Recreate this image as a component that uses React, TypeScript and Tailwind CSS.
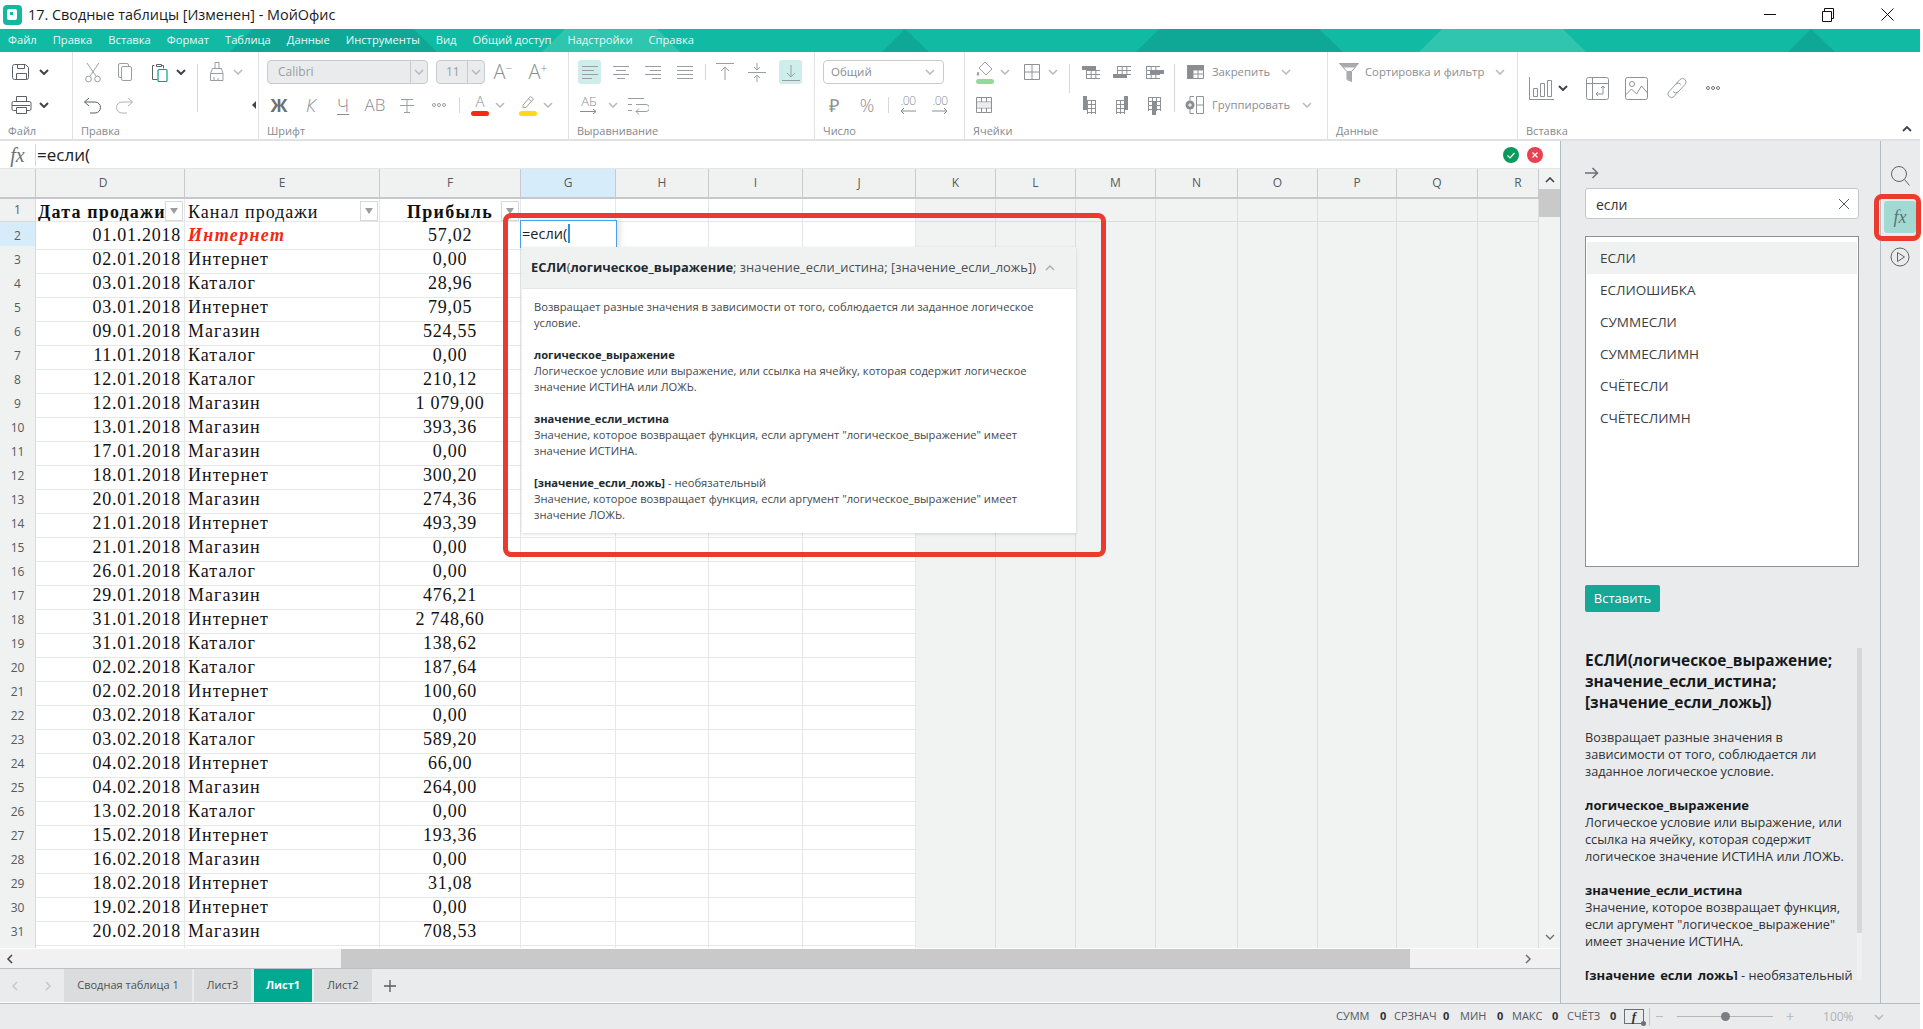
import type { ReactNode } from "react"

const rows: [string, string, string][] = [
  ["01.01.2018", "Интернет", "57,02"],
  ["02.01.2018", "Интернет", "0,00"],
  ["03.01.2018", "Каталог", "28,96"],
  ["03.01.2018", "Интернет", "79,05"],
  ["09.01.2018", "Магазин", "524,55"],
  ["11.01.2018", "Каталог", "0,00"],
  ["12.01.2018", "Каталог", "210,12"],
  ["12.01.2018", "Магазин", "1 079,00"],
  ["13.01.2018", "Магазин", "393,36"],
  ["17.01.2018", "Магазин", "0,00"],
  ["18.01.2018", "Интернет", "300,20"],
  ["20.01.2018", "Магазин", "274,36"],
  ["21.01.2018", "Интернет", "493,39"],
  ["21.01.2018", "Магазин", "0,00"],
  ["26.01.2018", "Каталог", "0,00"],
  ["29.01.2018", "Магазин", "476,21"],
  ["31.01.2018", "Интернет", "2 748,60"],
  ["31.01.2018", "Каталог", "138,62"],
  ["02.02.2018", "Каталог", "187,64"],
  ["02.02.2018", "Интернет", "100,60"],
  ["03.02.2018", "Каталог", "0,00"],
  ["03.02.2018", "Каталог", "589,20"],
  ["04.02.2018", "Интернет", "66,00"],
  ["04.02.2018", "Магазин", "264,00"],
  ["13.02.2018", "Каталог", "0,00"],
  ["15.02.2018", "Интернет", "193,36"],
  ["16.02.2018", "Магазин", "0,00"],
  ["18.02.2018", "Интернет", "31,08"],
  ["19.02.2018", "Интернет", "0,00"],
  ["20.02.2018", "Магазин", "708,53"],
]

const gridCols =
  "grid grid-cols-[36px_149px_195px_141px_95px_93px_94px_113px_80px_80px_80px_82px_80px_79px_81px_61px]"

const headers = ["D", "E", "F", "G", "H", "I", "J", "K", "L", "M", "N", "O", "P", "Q", "R"]
const functions = ["ЕСЛИ", "ЕСЛИОШИБКА", "СУММЕСЛИ", "СУММЕСЛИМН", "СЧЁТЕСЛИ", "СЧЁТЕСЛИМН"]
const serif = "font-['Liberation_Serif',serif] text-[18px] tracking-[0.75px] text-[#111]"

function Ico({ w = 24, h = 24, className = "", children }: { w?: number; h?: number; className?: string; children: ReactNode }) {
  return (
    <svg
      width={w}
      height={h}
      viewBox={`0 0 ${w} ${h}`}
      fill="none"
      stroke="currentColor"
      strokeWidth={1}
      className={`shrink-0 ${className.includes("text-") ? "" : "text-[#9a9ea2]"} ${className}`}
    >
      {children}
    </svg>
  )
}

function Chev({ dark = false, className = "" }: { dark?: boolean; className?: string }) {
  return (
    <svg width="10" height="6" viewBox="0 0 10 6" fill="none" className={`shrink-0 ${className}`}>
      <path d="M1 1l4 4 4-4" stroke={dark ? "#3f454a" : "#b9bcbf"} strokeWidth={dark ? 2 : 1.6} />
    </svg>
  )
}

function Sep({ className }: { className: string }) {
  return <div className={`w-px shrink-0 bg-[#d5d7d9] ${className}`} />
}

function TableGlyph({ kind }: { kind: number }) {
  // kinds 0-2: dark band in rows, 3-5: dark band in columns
  const dark = "#8b8e91"
  const shapes: Record<number, { g: [number, number, number, number]; d: [number, number, number, number] }> = {
    0: { g: [7, 10, 14, 8], d: [3, 6, 14, 4] },
    1: { g: [7, 6, 14, 8], d: [3, 14, 14, 4] },
    2: { g: [4, 6, 14, 12], d: [8, 10, 14, 4] },
    3: { g: [10, 7, 8, 14], d: [6, 3, 4, 14] },
    4: { g: [6, 7, 8, 14], d: [14, 3, 4, 14] },
    5: { g: [6, 4, 12, 14], d: [10, 8, 4, 14] },
  }
  const { g, d } = shapes[kind]
  const lines: ReactNode[] = []
  for (let x = g[0]; x <= g[0] + g[2]; x += kind < 3 ? 4.67 : 4) {
    lines.push(<line key={`v${x}`} x1={x + 0.5} y1={g[1]} x2={x + 0.5} y2={g[1] + g[3]} />)
  }
  for (let y = g[1]; y <= g[1] + g[3]; y += 4) {
    lines.push(<line key={`h${y}`} x1={g[0]} y1={y + 0.5} x2={g[0] + g[2]} y2={y + 0.5} />)
  }
  return (
    <Ico className="text-[#8f9295]">
      {lines}
      <rect x={d[0]} y={d[1]} width={d[2]} height={d[3]} fill={dark} stroke="none" />
    </Ico>
  )
}

function AlignLines({ offs }: { offs: [number, number][] }) {
  return (
    <>
      {offs.map(([a, b], i) => (
        <line key={i} x1={a} y1={6.5 + i * 4} x2={b} y2={6.5 + i * 4} />
      ))}
    </>
  )
}

function RibbonText({ children, className = "" }: { children: ReactNode; className?: string }) {
  return <span className={`shrink-0 whitespace-nowrap text-[11.3px] leading-6 text-[#8a8e92] ${className}`}>{children}</span>
}

function SectionLabel({ children }: { children: ReactNode }) {
  return <div className="mt-auto h-[18px] pl-[8px] text-[11px] leading-[19px] text-[#85898d]">{children}</div>
}

function FilterBtn({ className }: { className: string }) {
  return (
    <div className={`absolute top-[1.5px] flex h-[20px] w-[18px] items-center justify-center border border-[#d6d8d9] bg-white ${className}`}>
      <div className="h-0 w-0 border-x-[4.5px] border-t-[6px] border-x-transparent border-t-[#9b9d9f]" />
    </div>
  )
}

function Ribbon() {
  return (
    <div className="flex h-[89px] shrink-0 border-b-2 border-[#dfe1e2] bg-white">
      {/* Файл */}
      <div className="flex w-[73px] shrink-0 flex-col border-r border-[#dfe1e2] pt-2">
        <div className="flex h-6 items-center">
          <Ico className="ml-[9px] text-[#5d6266]">
            <path d="M5.5 4.5h11l3 3v10a2 2 0 01-2 2h-12a2 2 0 01-2-2v-11a2 2 0 012-2z" />
            <path d="M8.5 4.5v4h7v-4M7.5 19.5v-6h10v6" />
          </Ico>
          <Chev dark className="ml-[6px]" />
        </div>
        <div className="mt-[9px] flex h-6 items-center">
          <Ico className="ml-[9px] text-[#5d6266]">
            <path d="M7.5 8.5v-5h10v5M7.5 17.5h-3a1.5 1.5 0 01-1.5-1.5v-6a1.5 1.5 0 011.5-1.5h16a1.5 1.5 0 011.5 1.5v6a1.5 1.5 0 01-1.5 1.5h-3" />
            <path d="M7.5 14.5h10v6h-10zM3 12.5h18" />
          </Ico>
          <Chev dark className="ml-[6px]" />
        </div>
        <SectionLabel>Файл</SectionLabel>
      </div>

      {/* Правка */}
      <div className="flex w-[186px] shrink-0 flex-col border-r border-[#dfe1e2] pt-2">
        <div className="flex h-6 items-center">
          <Ico className="ml-[8px]">
            <path d="M6 3l9 13M18 3l-9 13" />
            <circle cx="7.5" cy="19" r="2.8" />
            <circle cx="16.5" cy="19" r="2.8" />
          </Ico>
          <Ico className="ml-[8px]">
            <rect x="5.5" y="3.5" width="10" height="14" rx="1.5" />
            <rect x="8.5" y="6.5" width="10" height="14" rx="1.5" fill="#fff" />
          </Ico>
          <Ico className="ml-[10px] text-[#5d6266]">
            <path d="M9.5 4.5h5v2h-5zM7.5 5.5h-2v14h5" />
            <path d="M14.5 5.5h2v3" />
            <rect x="11" y="9.5" width="9" height="12" rx="1" stroke="#00a28c" strokeWidth="1.2" fill="#fff" />
          </Ico>
          <Chev dark className="ml-[5px]" />
          <Sep className="ml-[11px] h-[29px] self-start mt-1" />
          <Ico className="ml-[7px]">
            <path d="M10 2.5h4v6h-4zM7.5 8.5h9l1.5 5v7H5.5v-7zM6 13.5h12M9 20v-3M13 20v-2" />
          </Ico>
          <Chev className="ml-[4px]" />
        </div>
        <div className="mt-[9px] flex h-6 items-center">
          <Ico className="ml-[8px] text-[#5d6266]">
            <path d="M8 5L3.5 9 8 13M3.5 9H14a5.5 5.5 0 010 11H9" />
          </Ico>
          <Ico className="ml-[7px] text-[#b1b4b7]">
            <path d="M16 5l4.5 4-4.5 4M20.5 9H10a5.5 5.5 0 000 11h5" />
          </Ico>
          <Sep className="ml-[61px] h-[19px] self-start" />
          <div className="ml-[54px] h-0 w-0 border-y-[4px] border-r-[4px] border-y-transparent border-r-[#3f454a]" />
        </div>
        <SectionLabel>Правка</SectionLabel>
      </div>

      {/* Шрифт */}
      <div className="flex w-[310px] shrink-0 flex-col border-r border-[#dfe1e2] pt-2">
        <div className="flex h-6 items-center">
          <div className="ml-[8px] flex h-6 w-[161px] shrink-0 items-center rounded-[4px] border border-[#c8cbce] bg-[#e9ebed]">
            <span className="flex-1 pl-[10px] text-[12px] text-[#9a9ea2]">Calibri</span>
            <div className="flex h-full w-[17px] items-center justify-center border-l border-[#c8cbce]">
              <Chev />
            </div>
          </div>
          <div className="ml-[8px] flex h-6 w-[49px] shrink-0 items-center rounded-[4px] border border-[#c8cbce] bg-[#e9ebed]">
            <span className="flex-1 pl-[9px] text-[12px] text-[#9a9ea2]">11</span>
            <div className="flex h-full w-[17px] items-center justify-center border-l border-[#c8cbce]">
              <Chev />
            </div>
          </div>
          <div className="ml-[6px] w-6 shrink-0 text-center text-[20px] font-light leading-6 text-[#8a8e92]">
            A<sup className="text-[12px] leading-none">−</sup>
          </div>
          <div className="ml-[11px] w-6 shrink-0 text-center text-[20px] font-light leading-6 text-[#8a8e92]">
            A<sup className="text-[12px] leading-none">+</sup>
          </div>
        </div>
        <div className="mt-[9px] flex h-6 items-center text-[#8a8e92]">
          <span className="ml-[8px] w-6 shrink-0 text-center text-[18px] font-bold leading-6 text-[#6b6f73]">Ж</span>
          <span className="ml-[8px] w-6 shrink-0 text-center text-[18px] font-light italic leading-6">К</span>
          <span className="ml-[8px] w-6 shrink-0 text-center text-[18px] font-light leading-6 underline underline-offset-2">Ч</span>
          <span className="ml-[8px] w-6 shrink-0 text-center text-[17px] font-light leading-6">АВ</span>
          <Ico className="ml-[8px]">
            <path d="M6 6.5h12M12 6.5v13M9 19.5h6M5 12.5h14" />
          </Ico>
          <Ico className="ml-[8px]">
            <circle cx="7" cy="12" r="1.5" />
            <circle cx="12" cy="12" r="1.5" />
            <circle cx="17" cy="12" r="1.5" />
          </Ico>
          <Sep className="ml-[8px] h-[16px]" />
          <div className="ml-[8px] flex w-6 shrink-0 flex-col items-center">
            <span className="text-[15px] font-light leading-[15px]">A</span>
            <div className="mt-[2px] h-[5px] w-[18px] rounded-full bg-[#f7281a]" />
          </div>
          <Chev className="ml-[3px]" />
          <div className="ml-[11px] flex w-6 shrink-0 flex-col items-center">
            <Ico w={16} h={15}>
              <path d="M3 11l7.5-8.5 3 2.5-7.5 8.5H3zM8.5 5l3 2.5" />
            </Ico>
            <div className="mt-[2px] h-[5px] w-[18px] rounded-full bg-[#ffd81a]" />
          </div>
          <Chev className="ml-[3px]" />
        </div>
        <SectionLabel>Шрифт</SectionLabel>
      </div>

      {/* Выравнивание */}
      <div className="flex w-[246px] shrink-0 flex-col border-r border-[#dfe1e2] pt-2">
        <div className="flex h-6 items-center">
          <div className="ml-[9px] flex h-6 w-[23px] shrink-0 items-center justify-center rounded-[3px] bg-[#cdeeea]">
            <Ico w={18} h={24}>
              <AlignLines offs={[[1, 17], [1, 13], [1, 17], [1, 11]]} />
            </Ico>
          </div>
          <Ico className="ml-[8px]"><AlignLines offs={[[4, 20], [7, 17], [4, 20], [8, 16]]} /></Ico>
          <Ico className="ml-[8px]"><AlignLines offs={[[4, 20], [9, 20], [4, 20], [11, 20]]} /></Ico>
          <Ico className="ml-[8px]"><AlignLines offs={[[4, 20], [4, 20], [4, 20], [4, 20]]} /></Ico>
          <Sep className="ml-[8px] h-[16px]" />
          <Ico className="ml-[7px]">
            <path d="M3 3.5h18M12 20V7M8 11l4-4 4 4" />
          </Ico>
          <Ico className="ml-[8px]">
            <path d="M3 12.5h18M12 3v7M9 7l3 3 3-3M12 22v-7M9 18l3-3 3 3" />
          </Ico>
          <div className="ml-[10px] flex h-6 w-[23px] shrink-0 items-center justify-center rounded-[3px] bg-[#cdeeea]">
            <Ico w={20} h={24}>
              <path d="M1 20.5h18M10 5v12M6 13l4 4 4-4" />
            </Ico>
          </div>
        </div>
        <div className="mt-[9px] flex h-6 items-center">
          <div className="ml-[8px] flex w-6 shrink-0 flex-col items-center text-[#8a8e92]">
            <span className="text-[13px] font-light leading-[13px]">АБ</span>
            <svg width="18" height="7" viewBox="0 0 18 7" fill="none" stroke="currentColor">
              <path d="M0 3.5h16M13 1l3 2.5L13 6" />
            </svg>
          </div>
          <Chev className="ml-[7px]" />
          <Ico className="ml-[7px]">
            <path d="M3 5.5h16M3 11.5h4M11 11.5h10a3.5 3.5 0 010 7H11M14 15.5l-3 3 3 3M3 17.5h4" />
          </Ico>
        </div>
        <SectionLabel>Выравнивание</SectionLabel>
      </div>

      {/* Число */}
      <div className="flex w-[150px] shrink-0 flex-col border-r border-[#dfe1e2] pt-2">
        <div className="flex h-6 items-center">
          <div className="ml-[8px] flex h-6 w-[121px] shrink-0 items-center rounded-[4px] border border-[#c8cbce] bg-white pr-[8px]">
            <span className="flex-1 pl-[7px] text-[11.5px] text-[#8a8e92]">Общий</span>
            <Chev />
          </div>
        </div>
        <div className="mt-[9px] flex h-6 items-center text-[#8a8e92]">
          <span className="ml-[7px] w-6 shrink-0 text-center text-[18px] font-light leading-6">₽</span>
          <span className="ml-[9px] w-6 shrink-0 text-center text-[18px] font-light leading-6">%</span>
          <Sep className="ml-[9px] h-[16px]" />
          <div className="ml-[7px] flex w-6 shrink-0 flex-col items-center">
            <span className="text-[12px] font-light leading-[12px] tracking-[-0.5px]">.00</span>
            <svg width="16" height="8" viewBox="0 0 16 8" fill="none" stroke="currentColor">
              <path d="M16 4H1M4 1L1 4l3 3" />
            </svg>
          </div>
          <div className="ml-[8px] flex w-6 shrink-0 flex-col items-center">
            <span className="text-[12px] font-light leading-[12px] tracking-[-0.5px]">.00</span>
            <svg width="16" height="8" viewBox="0 0 16 8" fill="none" stroke="currentColor">
              <path d="M0 4h15M12 1l3 3-3 3" />
            </svg>
          </div>
        </div>
        <SectionLabel>Число</SectionLabel>
      </div>

      {/* Ячейки */}
      <div className="flex w-[363px] shrink-0 flex-col border-r border-[#dfe1e2] pt-2">
        <div className="flex h-6 items-center">
          <div className="ml-[8px] flex w-6 shrink-0 flex-col items-center">
            <Ico w={20} h={18}>
              <path d="M10 1l7 7-6 6-7-7zM10 1L8 3M3 11l-1 3h2z" />
            </Ico>
            <div className="h-[5px] w-[18px] rounded-full bg-[#8fdb9c]" />
          </div>
          <Chev className="ml-[3px]" />
          <Ico className="ml-[10px] text-[#8f9295]">
            <path d="M4.5 4.5h15v15h-15zM12 4.5v15M4.5 12h15" />
          </Ico>
          <Chev className="ml-[4px]" />
          <Sep className="ml-[11px] h-[29px] self-start mt-1" />
          <div className="ml-[9px]"><TableGlyph kind={0} /></div>
          <div className="ml-[7px]"><TableGlyph kind={1} /></div>
          <div className="ml-[8px]"><TableGlyph kind={2} /></div>
          <Sep className="ml-[8px] h-[29px] self-start mt-1" />
          <Ico className="ml-[8px] text-[#8f9295]">
            <path d="M4.5 5.5h16v13h-16zM4.5 10h16M4.5 14h16M10 5.5v13M15 5.5v13" />
            <rect x="4" y="5" width="6" height="14" fill="#8b8e91" stroke="none" />
            <rect x="4" y="5" width="17" height="5" fill="#8b8e91" stroke="none" />
          </Ico>
          <RibbonText className="ml-[5px] w-[60px]">Закрепить</RibbonText>
          <Chev className="ml-[9px]" />
        </div>
        <div className="mt-[9px] flex h-6 items-center">
          <Ico className="ml-[7px] text-[#8f9295]">
            <path d="M4.5 4.5h15v15h-15zM4.5 9h15M4.5 15h15M9.5 4.5V9M14.5 4.5V9M9.5 15v4.5M14.5 15v4.5" />
            <rect x="5" y="9.5" width="14" height="5" fill="#eceded" stroke="none" />
          </Ico>
          <div className="ml-[81px]"><TableGlyph kind={3} /></div>
          <div className="ml-[9px]"><TableGlyph kind={4} /></div>
          <div className="ml-[8px]"><TableGlyph kind={5} /></div>
          <Sep className="ml-[8px] h-[19px] self-start" />
          <Ico className="ml-[8px] text-[#8f9295]">
            <path d="M13.5 3.5h7v17h-7zM13.5 12h7M7 3.5h4M7 20.5h4M7 3.5v4M7 16.5v4" />
            <circle cx="7" cy="12" r="4.5" fill="#8b8e91" stroke="none" />
            <path d="M7 10v4M5 12h4" stroke="#fff" />
          </Ico>
          <RibbonText className="ml-[5px] w-[80px]">Группировать</RibbonText>
          <Chev className="ml-[10px]" />
        </div>
        <SectionLabel>Ячейки</SectionLabel>
      </div>

      {/* Данные */}
      <div className="flex w-[190px] shrink-0 flex-col border-r border-[#dfe1e2] pt-2">
        <div className="flex h-6 items-center">
          <Ico className="ml-[9px]">
            <path d="M2.5 3.5h19l-7 8v10l-4.5-2v-8z" />
            <path d="M3 3.5h18l-3 4H6z" fill="#a9acaf" stroke="none" />
            <path d="M10 11h4.5v10l-4.5-2z" fill="#a9acaf" stroke="none" />
          </Ico>
          <RibbonText className="ml-[4px] w-[118px]">Сортировка и фильтр</RibbonText>
          <Chev className="ml-[12px]" />
        </div>
        <SectionLabel>Данные</SectionLabel>
      </div>

      {/* Вставка */}
      <div className="flex flex-1 flex-col pt-[24px]">
        <div className="flex h-6 items-center">
          <Ico w={28} className="ml-[9px] text-[#8f9295]">
            <path d="M2.5 1v22.5H27" />
            <path d="M6.5 12.5h4v8h-4zM13.5 7.5h4v13h-4zM20.5 4.5h4v16h-4z" />
          </Ico>
          <Chev dark className="ml-[3px]" />
          <Ico className="ml-[17px] text-[#8f9295]">
            <rect x="1.5" y="1.5" width="22" height="22" rx="2" />
            <path d="M1.5 7.5h22M7.5 1.5v22" />
            <path d="M18 10v8h-7M13 16l-2 2 2 2M16 12l2-2 2 2" />
          </Ico>
          <Ico className="ml-[15px] text-[#8f9295]">
            <rect x="1.5" y="1.5" width="22" height="22" rx="2" />
            <circle cx="8" cy="8" r="2.5" />
            <path d="M1.5 19l6-6 5 5 5-8 6 7" />
          </Ico>
          <Ico className="ml-[17px]">
            <path d="M10 9l5-5.5a3.5 3.5 0 015 5l-7 7.5a3.5 3.5 0 01-5-.5M14 15l-5 5.5a3.5 3.5 0 01-5-5l7-7.5a3.5 3.5 0 015 .5" />
          </Ico>
          <Ico className="ml-[12px] text-[#6f7478]">
            <circle cx="7" cy="12" r="1.5" />
            <circle cx="12" cy="12" r="1.5" />
            <circle cx="17" cy="12" r="1.5" />
          </Ico>
        </div>
        <div className="mt-auto flex h-[18px] items-center justify-between pl-[8px] pr-[8px]">
          <span className="pt-[1px] text-[11px] leading-[18px] text-[#85898d]">Вставка</span>
          <svg width="10" height="6" viewBox="0 0 10 6" fill="none" className="mb-[2px]">
            <path d="M1 5l4-4 4 4" stroke="#3f454a" strokeWidth="1.8" />
          </svg>
        </div>
      </div>
    </div>
  )
}

function SheetGrid() {
  return (
    <div className="relative h-[779px] w-[1539px] shrink-0 overflow-hidden bg-white">
      {/* column header */}
      <div className={`${gridCols} h-[30px] border-b-2 border-[#c6c9cc] bg-[#f0f2f2]`}>
        <div className="border-r border-[#c8cbce]" />
        {headers.map((h) => (
          <div
            key={h}
            className={`flex items-center justify-center border-r border-[#c8cbce] text-[12px] text-[#555a5e] ${h === "G" ? "bg-[#d6ecfb]" : ""} ${h === "D" ? "pr-[14px]" : ""} ${h === "R" ? "pl-[20px]" : ""}`}
          >
            {h}
          </div>
        ))}
      </div>

      {/* header row */}
      <div className={`${gridCols} h-[23px] ${serif}`}>
        <div className="flex items-center justify-center border-r border-b border-[#d8dada] bg-[#f0f2f2] font-['Open_Sans',sans-serif] text-[12px] tracking-normal text-[#555a5e]">
          1
        </div>
        <div className="relative flex h-[23px] items-start overflow-hidden border-r border-b border-[#e6e8e8] pl-[2px] font-bold leading-[26px] tracking-[1.15px]">
          Дата продажи
          <FilterBtn className="right-[1px]" />
        </div>
        <div className="relative flex h-[23px] items-start border-r border-b border-[#e6e8e8] pl-[3px] leading-[26px] tracking-[1px]">
          Канал продажи
          <FilterBtn className="right-[1px]" />
        </div>
        <div className="relative flex h-[23px] items-start justify-center border-r border-b border-[#e6e8e8] font-bold leading-[26px] tracking-[1.25px]">
          Прибыль
          <FilterBtn className="right-[1px]" />
        </div>
        {[0, 1, 2, 3].map((i) => (
          <div key={i} className="border-r border-b border-[#e6e8e8]" />
        ))}
        {[0, 1, 2, 3, 4, 5, 6, 7].map((i) => (
          <div key={i} className="border-r border-b border-[#dcdede] bg-[#f1f3f3]" />
        ))}
      </div>

      {rows.map(([date, channel, profit], r) => (
        <div key={r} className={`${gridCols} h-[24px] ${serif} leading-[27px]`}>
          <div
            className={`flex items-center justify-center border-r border-b border-[#d8dada] font-['Open_Sans',sans-serif] text-[12px] tracking-normal text-[#555a5e] ${r === 0 ? "bg-[#d6ecfb]" : "bg-[#f0f2f2]"}`}
          >
            {r + 2}
          </div>
          <div className="flex items-start justify-end border-r border-b border-[#e6e8e8] pr-[3px]">{date}</div>
          <div
            className={`flex items-start border-r border-b border-[#e6e8e8] pl-[3px] ${r === 0 ? "font-bold italic tracking-[1.35px] text-[#f02a12]" : "tracking-[1px]"}`}
          >
            {channel}
          </div>
          <div className="flex items-start justify-center border-r border-b border-[#e6e8e8]">{profit}</div>
          {[0, 1, 2, 3].map((i) => (
            <div key={i} className="border-r border-b border-[#e6e8e8]" />
          ))}
          {[0, 1, 2, 3, 4, 5, 6, 7].map((i) => (
            <div key={i} className="border-r border-b border-[#dcdede] bg-[#f1f3f3]" />
          ))}
        </div>
      ))}

      {/* tail row cut by the viewport */}
      <div className={`${gridCols} h-[24px]`}>
        <div className="border-r border-[#d8dada] bg-[#f0f2f2]" />
        {[0, 1, 2, 3, 4, 5, 6].map((i) => (
          <div key={i} className="border-r border-[#e6e8e8]" />
        ))}
        {[0, 1, 2, 3, 4, 5, 6, 7].map((i) => (
          <div key={i} className="border-r border-[#dcdede] bg-[#f1f3f3]" />
        ))}
      </div>

      {/* cell editor with the function hint under it */}
      <div className="absolute left-[520px] top-[51px] flex h-[28px] w-[97px] items-center border border-b-0 border-[#4aa0e6] bg-white pb-[2px] pl-[1px] text-[14.5px] text-[#222] shadow-[3px_0_6px_rgba(0,0,0,0.12)]">
        =если(
        <span className="ml-px h-[19px] w-[2px] bg-[#2d8fe0]" />
      </div>
      <div className="absolute left-[522px] top-[78px] w-[554px] bg-white shadow-[0_1px_3px_rgba(0,0,0,0.15)]">
        <div className="flex h-[42px] items-center border-b border-[#e6e8e8] bg-[#f0f2f2] pl-[9px] text-[12.9px] text-[#4a4f53]">
          <span className="font-bold text-[#222a30]">ЕСЛИ</span>(<span className="font-bold text-[#222a30]">логическое_выражение</span>; значение_если_истина; [значение_если_ложь])
          <svg width="10" height="6" viewBox="0 0 10 6" fill="none" className="ml-[9px]">
            <path d="M1 5l4-4 4 4" stroke="#a8abae" strokeWidth="1.4" />
          </svg>
        </div>
        <div className="px-[12px] pt-[10px] pb-[10px] text-[11.16px] leading-[16px] text-[#43484c]">
          <p>
            Возвращает разные значения в зависимости от того, соблюдается ли заданное логическое
            <br />
            условие.
          </p>
          <p className="mt-[16px]">
            <b className="text-[#222a30]">логическое_выражение</b>
            <br />
            Логическое условие или выражение, или ссылка на ячейку, которая содержит логическое
            <br />
            значение ИСТИНА или ЛОЖЬ.
          </p>
          <p className="mt-[16px]">
            <b className="text-[#222a30]">значение_если_истина</b>
            <br />
            Значение, которое возвращает функция, если аргумент "логическое_выражение" имеет
            <br />
            значение ИСТИНА.
          </p>
          <p className="mt-[16px]">
            <b className="text-[#222a30]">[значение_если_ложь]</b> - необязательный
            <br />
            Значение, которое возвращает функция, если аргумент "логическое_выражение" имеет
            <br />
            значение ЛОЖЬ.
          </p>
        </div>
      </div>
    </div>
  )
}

function LeftPane() {
  return (
    <div className="flex w-[1560px] shrink-0 flex-col">
      {/* formula bar */}
      <div className="flex h-[27px] shrink-0 items-center bg-white">
        <span className="w-[35px] shrink-0 text-center font-['Liberation_Serif',serif] text-[20px] italic text-[#6b7074]">fx</span>
        <div className="h-[22px] w-px bg-[#d5d7d9]" />
        <span className="ml-[1px] flex-1 pt-[1px] text-[17px] text-[#222]">=если(</span>
        <svg width="16" height="16" viewBox="0 0 16 16" className="mr-[8px]">
          <circle cx="8" cy="8" r="8" fill="#0a9a5c" />
          <path d="M4.5 8.5l2.5 2.5 4.5-5" fill="none" stroke="#fff" strokeWidth="1.2" />
        </svg>
        <svg width="16" height="16" viewBox="0 0 16 16" className="mr-[17px]">
          <circle cx="8" cy="8" r="8" fill="#e8414f" />
          <path d="M5.5 5.5l5 5M10.5 5.5l-5 5" fill="none" stroke="#fff" strokeWidth="1.2" />
        </svg>
      </div>

      <div className="flex h-[780px] shrink-0 border-t border-[#e4e6e6]">
        <SheetGrid />
        <div className="flex flex-1 flex-col items-center bg-[#f1f3f3] pt-[8px]">
          <svg width="10" height="6" viewBox="0 0 10 6" fill="none">
            <path d="M1 5l4-4 4 4" stroke="#3f454a" strokeWidth="1.6" />
          </svg>
          <div className="mt-[6px] h-[28px] w-full bg-[#c9c9c9]" />
          <svg width="10" height="6" viewBox="0 0 10 6" fill="none" className="mt-auto mb-[8px]">
            <path d="M1 1l4 4 4-4" stroke="#6c7074" strokeWidth="1.4" />
          </svg>
        </div>
      </div>

      {/* horizontal scrollbar */}
      <div className="flex h-[21px] shrink-0 items-center border-t border-white border-b border-b-[#bcc0c4] bg-[#f1f1f1]">
        <svg width="8" height="10" viewBox="0 0 8 10" fill="none" className="ml-[6px]">
          <path d="M6 1L2 5l4 4" stroke="#3f454a" strokeWidth="1.5" />
        </svg>
        <div className="ml-[327px] h-full w-[1069px] bg-[#c9c9c9]" />
        <svg width="8" height="10" viewBox="0 0 8 10" fill="none" className="ml-[114px]">
          <path d="M2 1l4 4-4 4" stroke="#6c7074" strokeWidth="1.5" />
        </svg>
      </div>

      {/* sheet tabs */}
      <div className="flex h-[33px] shrink-0 items-stretch bg-[#e9ebed] text-[11px] text-[#4d5256]">
        <svg width="8" height="10" viewBox="0 0 8 10" fill="none" className="ml-[11px] self-center">
          <path d="M6 1L2 5l4 4" stroke="#c4c7ca" strokeWidth="1.4" />
        </svg>
        <svg width="8" height="10" viewBox="0 0 8 10" fill="none" className="ml-[25px] self-center">
          <path d="M2 1l4 4-4 4" stroke="#c4c7ca" strokeWidth="1.4" />
        </svg>
        <div className="ml-[12px] flex w-[128px] items-center justify-center bg-[#dadcde]">Сводная таблица 1</div>
        <div className="ml-[2px] flex w-[57px] items-center justify-center bg-[#dadcde]">Лист3</div>
        <div className="ml-[3px] flex w-[58px] items-center justify-center bg-[#00a992] font-bold text-white">Лист1</div>
        <div className="ml-[2px] flex w-[58px] items-center justify-center bg-[#dadcde]">Лист2</div>
        <svg width="12" height="12" viewBox="0 0 12 12" className="ml-[12px] self-center">
          <path d="M6 0v12M0 6h12" stroke="#55595d" strokeWidth="1.3" />
        </svg>
      </div>
    </div>
  )
}

function FunctionsPanel() {
  return (
    <div className="flex w-[321px] shrink-0 flex-col border-x border-[#b4bcc4] bg-[#e9ebed] pl-[24px]">
      <svg width="14" height="12" viewBox="0 0 14 12" fill="none" className="mt-[26px]">
        <path d="M0 6h12M7.5 1l5 5-5 5" stroke="#6c7074" strokeWidth="1.5" />
      </svg>
      <div className="mt-[9px] flex h-[31px] w-[274px] shrink-0 items-center rounded-[3px] border border-[#c4c8cc] bg-white pl-[10px] pr-[8px]">
        <span className="flex-1 pt-[1px] text-[14px] text-[#333]">если</span>
        <svg width="12" height="12" viewBox="0 0 12 12" fill="none">
          <path d="M1 1l10 10M11 1L1 11" stroke="#55595d" />
        </svg>
      </div>
      <div className="mt-[17px] h-[331px] w-[274px] shrink-0 border border-[#8a9096] bg-white px-[1px] pt-[5px]">
        {functions.map((f, i) => (
          <div
            key={f}
            className={`flex h-[32px] items-center pl-[13px] pt-[1px] text-[13.5px] text-[#3a3f43] ${i === 0 ? "bg-[#f0f2f2]" : ""}`}
          >
            {f}
          </div>
        ))}
      </div>
      <div className="mt-[18px] flex h-[27px] w-[75px] shrink-0 items-center justify-center rounded-[2px] bg-[#14a897] text-[13px] text-white">
        Вставить
      </div>
      <div className="mt-[36px] flex h-[332px] shrink-0">
        <div className="w-[272px] shrink-0 overflow-hidden pt-[2px] text-[12.7px] leading-[17px] text-[#2e3236]">
          <div className="mb-[16px] text-[15.45px] font-bold leading-[21px] text-[#16191c]">
            ЕСЛИ(логическое_выражение;
            <br />
            значение_если_истина;
            <br />
            [значение_если_ложь])
          </div>
          <p>
            Возвращает разные значения в
            <br />
            зависимости от того, соблюдается ли
            <br />
            заданное логическое условие.
          </p>
          <p className="mt-[17px]">
            <b className="text-[13px] text-[#16191c]">логическое_выражение</b>
            <br />
            Логическое условие или выражение, или
            <br />
            ссылка на ячейку, которая содержит
            <br />
            логическое значение ИСТИНА или ЛОЖЬ.
          </p>
          <p className="mt-[17px]">
            <b className="text-[13px] text-[#16191c]">значение_если_истина</b>
            <br />
            Значение, которое возвращает функция,
            <br />
            если аргумент "логическое_выражение"
            <br />
            имеет значение ИСТИНА.
          </p>
          <p className="mt-[17px]">
            <b className="text-[13px] text-[#16191c]">[значение_если_ложь]</b> - необязательный
          </p>
        </div>
        <div className="flex w-[5px] shrink-0 flex-col bg-[#eff0f1]">
          <div className="h-[285px] bg-[#d5d7d9]" />
        </div>
      </div>
    </div>
  )
}

function RightStrip() {
  return (
    <div className="flex w-[39px] shrink-0 flex-col bg-[#e9ebed] pl-[3px]">
      <Ico className="ml-[4px] mt-[23px] text-[#5f6468]">
        <circle cx="11" cy="10" r="7.5" />
        <path d="M16.5 15.5l5 6" />
      </Ico>
      <div className="mt-[13px] flex h-[32px] w-[32px] shrink-0 items-center justify-center rounded-[3px] bg-[#a3d9d3] font-['Liberation_Serif',serif] text-[18px] italic text-[#5f7371]">
        fx
      </div>
      <Ico className="ml-[4px] mt-[12px] text-[#5f6468]">
        <circle cx="12" cy="12" r="9" />
        <path d="M9.5 7.5l7 4.5-7 4.5z" />
      </Ico>
    </div>
  )
}

function StatusBar() {
  const stats: [string, string][] = [
    ["СУММ", "w-[44px]"],
    ["СРЗНАЧ", "ml-[9px] w-[49px]"],
    ["МИН", "ml-[12px] w-[37px]"],
    ["МАКС", "ml-[10px] w-[40px]"],
    ["СЧЁТЗ", "ml-[10px] w-[43px]"],
  ]
  return (
    <div className="flex h-[26px] shrink-0 items-center border-t border-[#b4bcc4] bg-[#e9ebed] pl-[1336px] text-[11px] text-[#55595d]">
      {stats.map(([k, w]) => (
        <div key={k} className="contents">
          <span className={`shrink-0 ${w}`}>{k}</span>
          <b className="w-[5px] shrink-0 text-[#333]">0</b>
        </div>
      ))}
      <div className="relative ml-[9px] flex h-[15px] w-[20px] shrink-0 items-center justify-center border border-[#6c7074] font-['Liberation_Serif',serif] text-[13px] font-bold italic text-[#333]">
        f
        <div className="absolute -bottom-[3px] -right-[3px] h-[5px] w-[5px] rounded-full bg-[#6c7074]" />
      </div>
      <div className="ml-[5px] h-[18px] w-px bg-[#c4c8cc]" />
      <div className="ml-[6px] h-px w-[7px] bg-[#b9bcbf]" />
      <div className="ml-[14px] flex h-[9px] w-[96px] shrink-0 items-center">
        <div className="h-px w-[44px] bg-[#b4b7ba]" />
        <div className="h-[9px] w-[9px] shrink-0 rounded-full bg-[#7a7e82]" />
        <div className="h-px flex-1 bg-[#b4b7ba]" />
      </div>
      <span className="ml-[13px] text-[14px] text-[#b9bcbf]">+</span>
      <span className="ml-[29px] text-[12px] text-[#b1b4b7]">100%</span>
      <Chev className="ml-[20px]" />
    </div>
  )
}

export default function App() {
  return (
    <div className="relative h-[1029px] w-[1923px] overflow-hidden bg-white font-['Open_Sans',sans-serif]">
      <div className="flex h-[1029px] w-[1920px] flex-col">
        {/* title bar */}
        <div className="flex h-[29px] shrink-0 items-center bg-white">
          <svg width="19" height="20" viewBox="0 0 19 20" className="ml-[3px]">
            <rect width="19" height="20" rx="4" fill="#12b8a0" />
            <rect x="4" y="4" width="10" height="11" rx="2" fill="#fff" />
            <rect x="7" y="7" width="3" height="3" fill="#12b8a0" />
          </svg>
          <span className="ml-[6px] flex-1 text-[14.4px] text-[#1b1b1b]">17. Сводные таблицы [Изменен] - МойОфис</span>
          <div className="h-px w-[12px] bg-[#111]" />
          <svg width="12" height="14" viewBox="0 0 12 14" fill="none" stroke="#111" className="ml-[46px]">
            <path d="M.5 3.5h9v10h-9zM2.5 3.5v-3h9v10h-2" />
          </svg>
          <svg width="13" height="13" viewBox="0 0 13 13" fill="none" stroke="#111" className="ml-[47px] mr-[26px]">
            <path d="M.5.5l12 12M12.5.5l-12 12" />
          </svg>
        </div>

        {/* menu */}
        <div className="relative flex h-[23px] shrink-0 items-center gap-[16px] overflow-hidden bg-[#11bba3] pl-[8px] text-[11.2px] text-[#e8f8f5]">
          <svg width="1920" height="23" className="absolute left-0 top-0">
            <polygon points="230,23 253,0 414,0 437,23" fill="#0fa896" />
            <polygon points="542,23 565,0 657,0 680,23" fill="#2fc5ae" />
            <polygon points="882,23 905,0 929,23" fill="#0fa896" />
            <polygon points="1136,23 1159,0 1319,0 1343,23" fill="#0fa896" />
            <polygon points="1419,23 1442,0 1563,0 1586,23" fill="#2fc5ae" />
            <polygon points="1788,23 1811,0 1835,23" fill="#0fa896" />
          </svg>
          {["Файл", "Правка", "Вставка", "Формат", "Таблица", "Данные", "Инструменты", "Вид", "Общий доступ", "Надстройки", "Справка"].map((m) => (
            <span key={m} className="relative">{m}</span>
          ))}
        </div>

        <Ribbon />

        <div className="flex min-h-0 flex-1">
          <LeftPane />
          <FunctionsPanel />
          <RightStrip />
        </div>

        <StatusBar />
      </div>

      {/* red callouts */}
      <div className="pointer-events-none absolute left-[503px] top-[213px] h-[344px] w-[603px] rounded-[8px] border-[5px] border-[#e93c2f]" />
      <div className="pointer-events-none absolute left-[1874px] top-[194px] h-[47px] w-[47px] rounded-[8px] border-[5px] border-[#e93c2f]" />
    </div>
  )
}
